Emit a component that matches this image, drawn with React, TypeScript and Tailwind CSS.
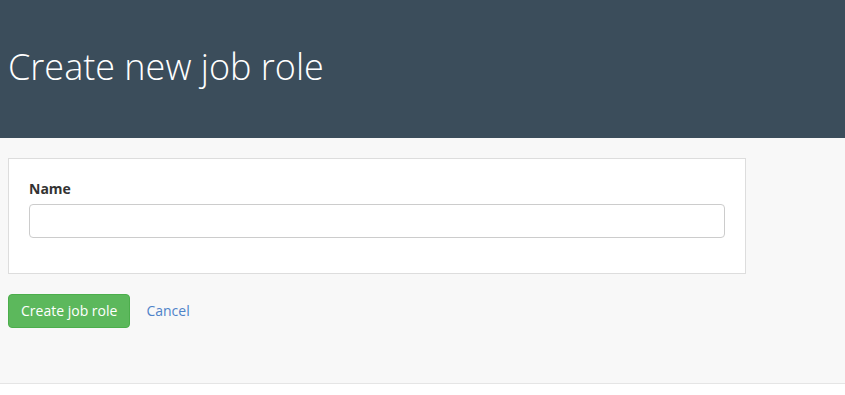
import React from "react";

const App = () => {
  return (
    <div className="min-h-[395px] bg-white font-['Open_Sans',sans-serif] text-[#333]">
      {/* Header */}
      <header className="h-[138px] bg-[#3b4d5b] px-2 pt-[47px]">
        <h1 className="text-[36px] font-light leading-10 text-white">Create new job role</h1>
      </header>

      {/* Form area */}
      <main className="bg-[#f8f8f8] border-b border-[#e5e5e5] px-2 pt-5 pb-[55px]">
        <div className="w-[738px] border border-[#dddddd] bg-white p-5">
          <label className="block text-sm font-bold leading-5 mb-[5px]">Name</label>
          <input
            type="text"
            className="block w-full h-[34px] rounded border border-[#cccccc] bg-white px-3 text-sm mb-[15px]"
          />
        </div>

        <div className="flex items-center mt-5">
          <button className="h-[34px] rounded bg-[#5cb85c] border border-[#4cae4c] px-3 text-sm text-white">
            Create job role
          </button>
          <a href="#" className="ml-4 text-sm text-[#4f83c9]">
            Cancel
          </a>
        </div>
      </main>
    </div>
  );
};

export default App;
